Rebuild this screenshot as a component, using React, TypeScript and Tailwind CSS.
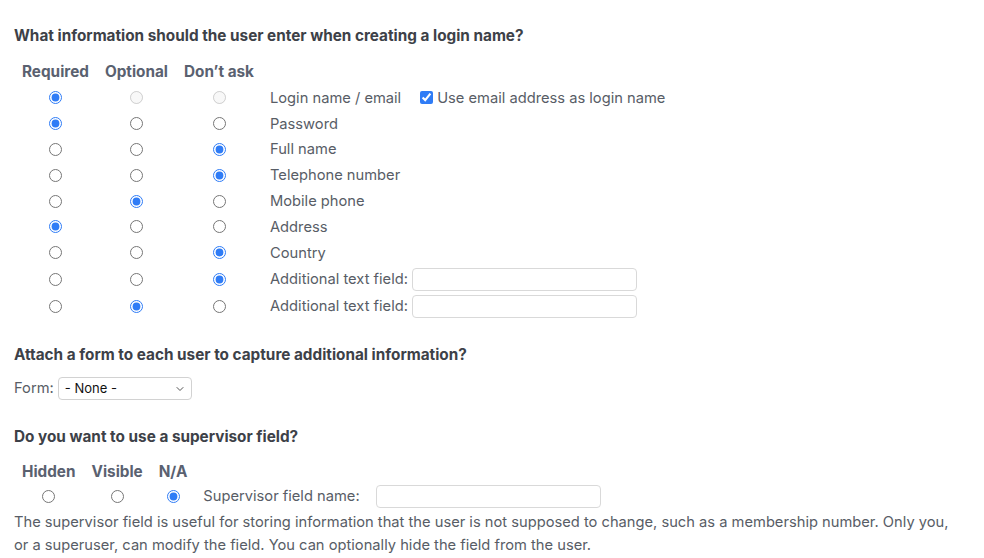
import { ChevronDown } from "lucide-react";

// ── Types ──────────────────────────────────────────────────────────────────────

type Choice = "required" | "optional" | "skip";

type FieldRow = {
  label: string;
  choice: Choice;
  locked?: boolean;
  input?: boolean;
  checkbox?: string;
};

const fields: FieldRow[] = [
  { label: "Login name / email", choice: "required", locked: true, checkbox: "Use email address as login name" },
  { label: "Password", choice: "required" },
  { label: "Full name", choice: "skip" },
  { label: "Telephone number", choice: "skip" },
  { label: "Mobile phone", choice: "optional" },
  { label: "Address", choice: "required" },
  { label: "Country", choice: "skip" },
  { label: "Additional text field:", choice: "skip", input: true },
  { label: "Additional text field:", choice: "optional", input: true },
];

const choices: Choice[] = ["required", "optional", "skip"];

// ── Radio ──────────────────────────────────────────────────────────────────────

function Radio({ checked, disabled, name }: { checked: boolean; disabled?: boolean; name: string }) {
  return (
    <input
      type="radio"
      name={name}
      defaultChecked={checked}
      disabled={disabled}
      className="m-0 h-[13px] w-[13px] accent-[#2f7cf6]"
    />
  );
}

function TextBox() {
  return (
    <input
      type="text"
      className="h-[23px] w-[225px] rounded-[4px] border border-[#d9d9d9] bg-white px-1 text-[14px] outline-none"
    />
  );
}

// ── App ────────────────────────────────────────────────────────────────────────

export default function App() {
  return (
    <div
      className="min-h-screen bg-white px-[14px] pt-[26px] text-[14.7px] text-[#585d66]"
      style={{ fontFamily: "Inter, 'Liberation Sans', sans-serif" }}
    >
      {/* Login name fields */}
      <h2 className="text-[15.3px] leading-[20px] font-bold text-[#3d4148]">
        What information should the user enter when creating a login name?
      </h2>

      <div className="mt-[13px] grid grid-cols-[auto_auto_auto_1fr] items-center">
        <div className="h-[26px] px-2 text-[15.3px] leading-[26px] font-bold text-[#5a6170]">Required</div>
        <div className="h-[26px] px-2 text-[15.3px] leading-[26px] font-bold text-[#5a6170]">Optional</div>
        <div className="h-[26px] px-2 text-[15.3px] leading-[26px] font-bold text-[#5a6170]">Don’t ask</div>
        <div />

        {fields.map((f, i) => {
          const rowH = f.input ? "h-[27px]" : "h-[25.8px]";
          return [
            ...choices.map((c) => (
              <div key={`${i}-${c}`} className={`${rowH} flex items-center justify-center px-2`}>
                <Radio
                  name={`field-${i}`}
                  checked={f.choice === c}
                  disabled={f.locked && f.choice !== c}
                />
              </div>
            )),
            <div key={`${i}-label`} className={`${rowH} flex items-center px-2`}>
              <span>{f.label}</span>
              {f.input && (
                <span className="ml-[4px]">
                  <TextBox />
                </span>
              )}
              {f.checkbox && (
                <label className="ml-[19px] flex items-center gap-[4px]">
                  <input type="checkbox" defaultChecked className="m-0 h-[13px] w-[13px] accent-[#2f7cf6]" />
                  <span>{f.checkbox}</span>
                </label>
              )}
            </div>,
          ];
        })}
      </div>

      {/* Form */}
      <h2 className="mt-[25px] text-[15.3px] leading-[20px] font-bold text-[#3d4148]">
        Attach a form to each user to capture additional information?
      </h2>
      <div className="mt-[12px] flex items-center gap-[4px]">
        <span>Form:</span>
        <div className="relative">
          <select className="h-[23px] w-[134px] appearance-none rounded-[4px] border border-[#d2d2d2] bg-white pl-[6px] text-[13px] text-[#111] outline-none">
            <option>- None -</option>
          </select>
          <ChevronDown
            size={12}
            strokeWidth={2}
            className="pointer-events-none absolute top-[6px] right-[6px] text-[#555]"
          />
        </div>
      </div>

      {/* Supervisor */}
      <h2 className="mt-[27px] text-[15.3px] leading-[20px] font-bold text-[#3d4148]">
        Do you want to use a supervisor field?
      </h2>
      <div className="mt-[12px] grid grid-cols-[auto_auto_auto_auto_1fr] items-center">
        <div className="h-[25px] px-2 text-[15.3px] leading-[25px] font-bold text-[#5a6170]">Hidden</div>
        <div className="h-[25px] px-2 text-[15.3px] leading-[25px] font-bold text-[#5a6170]">Visible</div>
        <div className="h-[25px] px-2 text-[15.3px] leading-[25px] font-bold text-[#5a6170]">N/A</div>
        <div />
        <div />
        <div className="flex h-[25px] items-center justify-center px-2">
          <Radio name="sup" checked={false} />
        </div>
        <div className="flex h-[25px] items-center justify-center px-2">
          <Radio name="sup" checked={false} />
        </div>
        <div className="flex h-[25px] items-center justify-center px-2">
          <Radio name="sup" checked />
        </div>
        <div className="flex h-[25px] items-center px-2">Supervisor field name:</div>
        <div className="flex h-[25px] items-center px-2">
          <TextBox />
        </div>
      </div>
      <p className="mt-[2px] pr-[14px] leading-[23px]">
        The supervisor field is useful for storing information that the user is not supposed to change, such as a
        membership number. Only you, or a superuser, can modify the field. You can optionally hide the field from the
        user.
      </p>
    </div>
  );
}
